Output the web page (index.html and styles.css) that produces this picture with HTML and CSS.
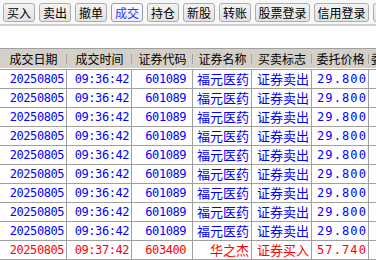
FILE: index.html
```html
<!DOCTYPE html>
<html lang="zh-CN">
<head>
<meta charset="utf-8">
<title>成交</title>
<link rel="stylesheet" href="styles.css">
</head>
<body>
<div class="toolbar">
  <button class="btn">买入</button>
  <button class="btn">卖出</button>
  <button class="btn">撤单</button>
  <button class="btn on">成交</button>
  <button class="btn">持仓</button>
  <button class="btn">新股</button>
  <button class="btn">转账</button>
  <button class="btn wide">股票登录</button>
  <button class="btn wide">信用登录</button>
  <button class="btn">刷新</button>
</div>
<div class="list">
  <div class="row head">
    <div class="h">成交日期</div>
    <div class="h">成交时间</div>
    <div class="h">证券代码</div>
    <div class="h">证券名称</div>
    <div class="h">买卖标志</div>
    <div class="h">委托价格</div>
    <div class="h last">委托数量</div>
  </div>
  <div class="rows">
    <div class="row data blue"><div class="c num">20250805</div><div class="c num">09:36:42</div><div class="c num code">601089</div><div class="c">福元医药</div><div class="c">证券卖出</div><div class="c num price">29.800</div><div class="c"></div></div>
    <div class="row data blue"><div class="c num">20250805</div><div class="c num">09:36:42</div><div class="c num code">601089</div><div class="c">福元医药</div><div class="c">证券卖出</div><div class="c num price">29.800</div><div class="c"></div></div>
    <div class="row data blue"><div class="c num">20250805</div><div class="c num">09:36:42</div><div class="c num code">601089</div><div class="c">福元医药</div><div class="c">证券卖出</div><div class="c num price">29.800</div><div class="c"></div></div>
    <div class="row data blue"><div class="c num">20250805</div><div class="c num">09:36:42</div><div class="c num code">601089</div><div class="c">福元医药</div><div class="c">证券卖出</div><div class="c num price">29.800</div><div class="c"></div></div>
    <div class="row data blue"><div class="c num">20250805</div><div class="c num">09:36:42</div><div class="c num code">601089</div><div class="c">福元医药</div><div class="c">证券卖出</div><div class="c num price">29.800</div><div class="c"></div></div>
    <div class="row data blue"><div class="c num">20250805</div><div class="c num">09:36:42</div><div class="c num code">601089</div><div class="c">福元医药</div><div class="c">证券卖出</div><div class="c num price">29.800</div><div class="c"></div></div>
    <div class="row data blue"><div class="c num">20250805</div><div class="c num">09:36:42</div><div class="c num code">601089</div><div class="c">福元医药</div><div class="c">证券卖出</div><div class="c num price">29.800</div><div class="c"></div></div>
    <div class="row data blue"><div class="c num">20250805</div><div class="c num">09:36:42</div><div class="c num code">601089</div><div class="c">福元医药</div><div class="c">证券卖出</div><div class="c num price">29.800</div><div class="c"></div></div>
    <div class="row data blue"><div class="c num">20250805</div><div class="c num">09:36:42</div><div class="c num code">601089</div><div class="c">福元医药</div><div class="c">证券卖出</div><div class="c num price">29.800</div><div class="c"></div></div>
    <div class="row data red"><div class="c num">20250805</div><div class="c num">09:37:42</div><div class="c num code">603400</div><div class="c">华之杰</div><div class="c">证券买入</div><div class="c num price">57.740</div><div class="c"></div></div>
  </div>
</div>
</body>
</html>
```

FILE: styles.css
```css
html, body {
  margin: 0;
  padding: 0;
}
body {
  width: 376px;
  height: 260px;
  overflow: hidden;
  background: #ffffff;
  font-family: "Noto Sans CJK SC", "Noto Sans", sans-serif;
}

.toolbar {
  display: flex;
  gap: 4px;
  height: 26px;
  padding: 3px 0 0 3px;
  box-sizing: border-box;
  background: #f7f7f7;
  border-bottom: 2px solid #d0d0d0;
  white-space: nowrap;
}
.btn {
  flex: none;
  width: 32px;
  height: 19px;
  padding: 0;
  margin: 0;
  box-sizing: border-box;
  border: 1px solid #acacac;
  border-radius: 3px;
  background: linear-gradient(#f3f3f3, #e2e2e2);
  color: #000000;
  font-family: "Noto Sans CJK SC", sans-serif;
  font-size: 12px;
  line-height: 17px;
}
.btn.wide {
  width: 55px;
}
.btn.on {
  background: linear-gradient(#fcfcff, #eef0fc);
  border-color: #9a9ab8;
  color: #3030ff;
}

.list {
  margin-top: 22px;
}
.row {
  display: grid;
  grid-template-columns: 67px 65px 61px 59px 60px 57px 60px;
}
.head {
  height: 19px;
  background: #d4d0c8;
  border-top: 1px solid #a0a0a0;
  margin-bottom: 1px;
}
.h {
  position: relative;
  text-align: center;
  font-size: 12px;
  line-height: 19px;
  color: #000000;
  white-space: nowrap;
  overflow: hidden;
}
.h::after {
  content: "";
  position: absolute;
  right: 0;
  top: 5px;
  width: 1px;
  height: 10px;
  background: #a4a4a4;
}
.h.last {
  text-align: left;
  padding-left: 2px;
}
.rows {
  border-top: 1px solid #a0a0a0;
}
.data {
  height: 19px;
  box-sizing: border-box;
  border-bottom: 1px solid #a0a0a0;
}
.c {
  box-sizing: border-box;
  border-right: 1px solid #a0a0a0;
  text-align: right;
  padding-right: 2px;
  font-size: 13px;
  line-height: 18px;
  white-space: nowrap;
  overflow: hidden;
}
.c:last-child {
  border-right: none;
}
.num {
  font-family: "DejaVu Sans Mono", "Liberation Mono", monospace;
  font-size: 12px;
  letter-spacing: -0.45px;
}
.code {
  padding-right: 6px;
}
.price {
  letter-spacing: 1.1px;
  padding-right: 1px;
}
.blue {
  color: #0000ff;
}
.red {
  color: #ff0000;
}
```
